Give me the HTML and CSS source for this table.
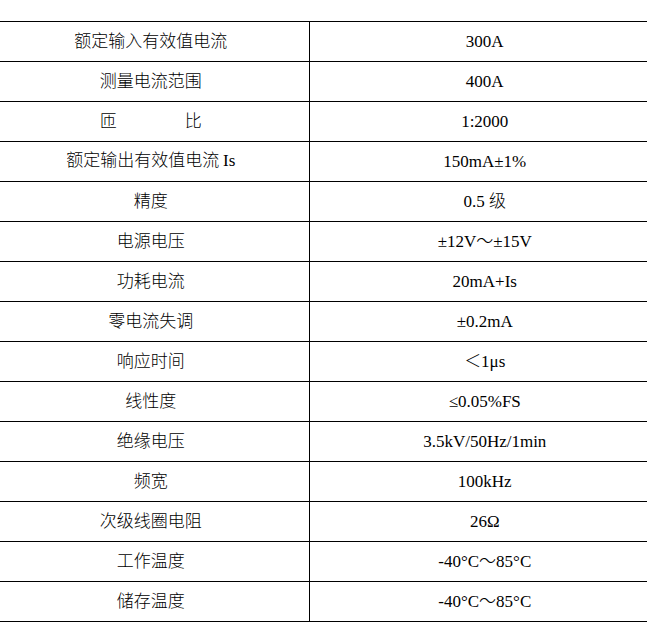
FILE: index.html
```html
<!DOCTYPE html>
<html lang="zh-CN">
<head>
<meta charset="utf-8">
<title>参数表</title>
<link rel="stylesheet" href="styles.css">
</head>
<body>
<div class="page">
<table class="spec">
<colgroup><col class="c-name"><col class="c-val"></colgroup>
<tbody>
<tr><td class="name">额定输入有效值电流</td><td class="val">300A</td></tr>
<tr><td class="name">测量电流范围</td><td class="val">400A</td></tr>
<tr><td class="name">匝　　　　比</td><td class="val">1:2000</td></tr>
<tr><td class="name">额定输出有效值电流 <span class="lat">Is</span></td><td class="val">150mA±1%</td></tr>
<tr><td class="name">精度</td><td class="val">0.5 级</td></tr>
<tr><td class="name">电源电压</td><td class="val">±12V～±15V</td></tr>
<tr><td class="name">功耗电流</td><td class="val">20mA+Is</td></tr>
<tr><td class="name">零电流失调</td><td class="val">±0.2mA</td></tr>
<tr><td class="name">响应时间</td><td class="val">＜1μs</td></tr>
<tr><td class="name">线性度</td><td class="val">≤0.05%FS</td></tr>
<tr><td class="name">绝缘电压</td><td class="val">3.5kV/50Hz/1min</td></tr>
<tr><td class="name">频宽</td><td class="val">100kHz</td></tr>
<tr><td class="name">次级线圈电阻</td><td class="val">26Ω</td></tr>
<tr><td class="name">工作温度</td><td class="val">-40°C～85°C</td></tr>
<tr><td class="name">储存温度</td><td class="val">-40°C～85°C</td></tr>
</tbody>
</table>
</div>
</body>
</html>
```
FILE: styles.css
```css
html, body {
  margin: 0;
  padding: 0;
  background: #fff;
}
.page {
  width: 647px;
  overflow: hidden;
  padding-top: 21px;
}
.spec {
  border-collapse: collapse;
  table-layout: fixed;
  width: 667px;
  margin-left: -7px;
  color: #000;
}
.c-name { width: 316px; }
.c-val { width: 351px; }
.spec tr { height: 40px; }
.spec td {
  border-top: 1px solid #000;
  border-bottom: 1px solid #000;
  padding: 0;
  text-align: center;
  vertical-align: middle;
}
.spec td.name {
  border-right: 1px solid #000;
  font-family: "Noto Sans CJK SC", sans-serif;
  font-weight: 300;
  font-size: 17px;
  line-height: 20px;
  padding-bottom: 3px;
}
.spec td.val {
  font-family: "Liberation Serif", "Noto Sans CJK SC", serif;
  font-weight: 300;
  font-size: 17px;
  line-height: 20px;
}
.lat {
  font-family: "Liberation Serif", serif;
  font-weight: 400;
}
```
